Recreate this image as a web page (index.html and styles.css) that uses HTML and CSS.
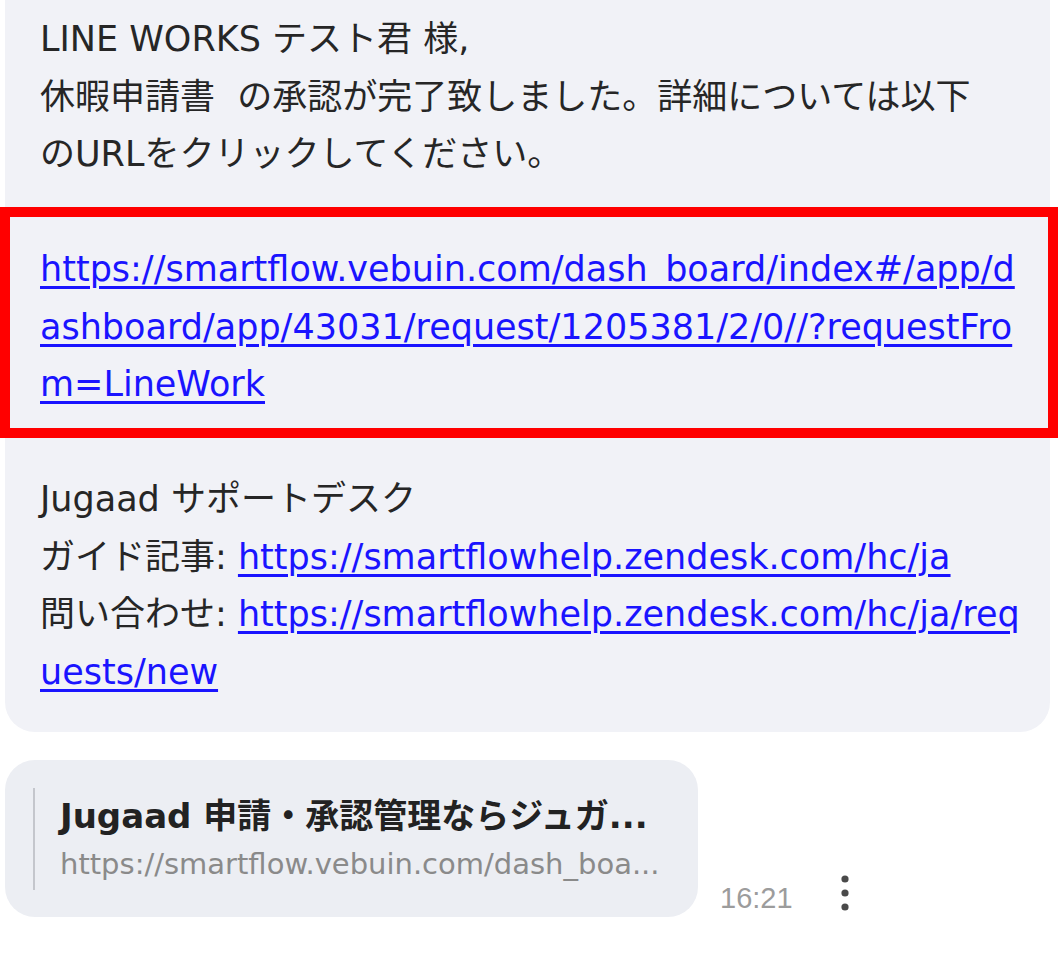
FILE: index.html
```html
<!DOCTYPE html>
<html lang="ja">
<head>
<meta charset="utf-8">
<title>Message</title>
<link rel="stylesheet" href="styles.css">
</head>
<body>
<div class="thread">
  <div class="bubble">
    <p class="para">LINE WORKS テスト君 様,<br>休暇申請書&nbsp; の承認が完了致しました。詳細については以下<br>のURLをクリックしてください。</p>
    <p class="para highlight"><a class="link" href="#">https://smartflow.vebuin.com/dash_board/index#/app/d<br>ashboard/app/43031/request/1205381/2/0//?requestFro<br>m=LineWork</a></p>
    <p class="para">Jugaad サポートデスク<br>ガイド記事: <a class="link" href="#">https://smartflowhelp.zendesk.com/hc/ja</a><br>問い合わせ: <a class="link" href="#">https://smartflowhelp.zendesk.com/hc/ja/req<br>uests/new</a></p>
  </div>

  <div class="row">
    <div class="card">
      <div class="card-bar"></div>
      <div class="card-body">
        <div class="card-title">Jugaad 申請・承認管理ならジュガ...</div>
        <div class="card-url">https://smartflow.vebuin.com/dash_boa...</div>
      </div>
    </div>
    <span class="time">16:21</span>
    <svg class="kebab" width="12" height="40" viewBox="0 0 12 40" aria-hidden="true">
      <circle cx="6" cy="6" r="3.6" fill="#4a4a4a"/>
      <circle cx="6" cy="20" r="3.6" fill="#4a4a4a"/>
      <circle cx="6" cy="34" r="3.6" fill="#4a4a4a"/>
    </svg>
  </div>
</div>
</body>
</html>
```

FILE: styles.css
```css
html, body {
  margin: 0;
  padding: 0;
  background: #ffffff;
}

body {
  width: 1058px;
  height: 953px;
  overflow: hidden;
  font-family: "DejaVu Sans", "Noto Sans CJK JP", sans-serif;
  color: #262626;
}

.thread {
  padding-left: 5px;
}

.bubble {
  width: 975px;
  background: #f1f2f7;
  border-radius: 0 0 30px 30px;
  padding: 11px 35px 31px 35px;
  font-size: 35px;
  line-height: 57.5px;
  white-space: nowrap;
}

.para {
  margin: 0 0 57.5px 0;
}

.para:last-child {
  margin-bottom: 0;
}

.highlight {
  position: relative;
}

.highlight::after {
  content: "";
  position: absolute;
  top: -34px;
  bottom: -24px;
  left: -40px;
  right: -43px;
  border: 10px solid #ff0000;
  pointer-events: none;
}

.link {
  color: #1a14ff;
  text-decoration: underline;
  text-decoration-thickness: 2.5px;
  text-underline-offset: 5px;
}

.row {
  display: flex;
  align-items: flex-end;
  margin-top: 28px;
}

.card {
  display: flex;
  align-items: center;
  gap: 25px;
  width: 693px;
  height: 157px;
  box-sizing: border-box;
  padding: 0 20px 0 28px;
  background: #eceef3;
  border-radius: 30px;
}

.card-bar {
  flex: none;
  width: 2px;
  height: 102px;
  background: #c4c6cc;
}

.card-body {
  flex: 1;
  min-width: 0;
  display: flex;
  flex-direction: column;
  gap: 10px;
}

.card-title,
.card-url {
  white-space: nowrap;
}

.card-title {
  font-size: 34px;
  font-weight: bold;
  line-height: 40px;
  color: #222222;
}

.card-url {
  font-size: 29px;
  line-height: 36px;
  color: #8a8a8a;
}

.time {
  margin-left: 22px;
  margin-bottom: 2px;
  font-family: "Liberation Sans", sans-serif;
  font-size: 29px;
  line-height: 34px;
  color: #9c9c9c;
}

.kebab {
  display: block;
  margin-left: 46px;
  margin-bottom: 4px;
}
```
